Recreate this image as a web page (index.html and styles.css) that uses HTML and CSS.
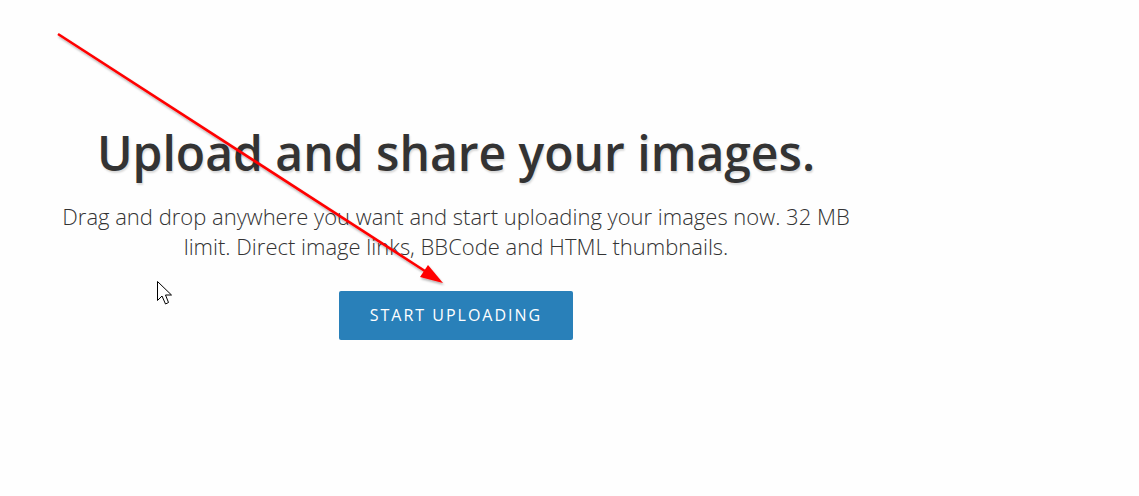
FILE: index.html
```html
<!DOCTYPE html>
<html lang="en">
<head>
    <meta charset="UTF-8">
    <title>Upload and share your images</title>
    <link rel="stylesheet" href="styles.css">
</head>
<body>
<div class="hero">
    <h1 class="hero-title">Upload and share your images.</h1>
    <p class="hero-text">Drag and drop anywhere you want and start uploading your images now. 32 MB limit. Direct image links, BBCode and HTML thumbnails.</p>
    <a href="#" class="btn">START UPLOADING</a>
</div>

<!-- annotation drawn over the page -->
<svg class="overlay" width="1139" height="496" viewBox="0 0 1139 496">
    <defs>
        <filter id="sh" x="-10%" y="-10%" width="120%" height="120%">
            <feDropShadow dx="1" dy="2" stdDeviation="1" flood-color="#000" flood-opacity="0.3"/>
        </filter>
    </defs>
    <g filter="url(#sh)">
        <line x1="58" y1="34" x2="428" y2="273" stroke="#ff0000" stroke-width="2.6"/>
        <polygon points="443,283 420,277 428,265" fill="#ff0000"/>
    </g>
    <path d="M157.5 281.5 L157.5 300.5 L162 296 L165.5 304 L168.5 302.5 L165.5 295 L171.5 295 Z" fill="#fff" stroke="#000" stroke-width="1"/>
</svg>
</body>
</html>
```

FILE: styles.css
```css
*{
    margin: 0;
    padding: 0;
    box-sizing: border-box;
}
body{
    background-color: #fefefe;
    font-family: "Open Sans", "Liberation Sans", sans-serif;
    color: #333;
    width: 1139px;
    height: 496px;
    overflow: hidden;
}
.hero{
    width: 810px;
    margin-left: 51px;
    padding-top: 120px;
    text-align: center;
}
.hero-title{
    font-size: 48px;
    font-weight: 600;
    line-height: 66px;
    color: #333;
    text-shadow: 1px 2px 2px rgba(0,0,0,0.15);
}
.hero-text{
    font-size: 22px;
    font-weight: 300;
    line-height: 30px;
    color: #333;
    margin-top: 15px;
}
.btn{
    display: inline-block;
    margin-top: 30px;
    width: 234px;
    height: 49px;
    line-height: 49px;
    background-color: #2980b9;
    color: #fff;
    font-size: 16px;
    letter-spacing: 2px;
    text-decoration: none;
    border-radius: 2px;
}
.overlay{
    position: absolute;
    left: 0;
    top: 0;
    pointer-events: none;
}
```
